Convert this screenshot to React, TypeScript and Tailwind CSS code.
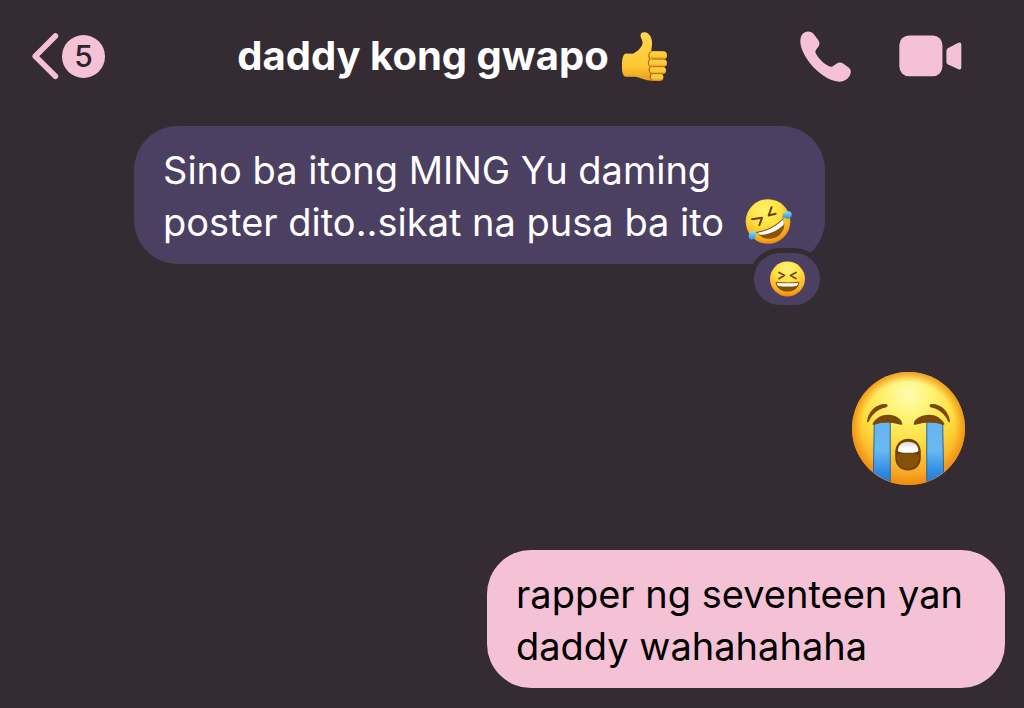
import React from "react";

interface Message {
  id: number;
  text: string;
  emoji?: React.ReactNode;
  reaction?: React.ReactNode;
}

const BackIcon = () => (
  <svg viewBox="36 34 80 142" className="h-[47px] w-[27px]" aria-hidden="true">
    <path
      d="M106 43 L45 104 L106 165"
      fill="none"
      stroke="#f5c1d5"
      strokeWidth="17"
      strokeLinecap="round"
      strokeLinejoin="round"
    />
  </svg>
);

const PhoneIcon = () => (
  <svg viewBox="29 30 154 154" className="size-[51px]" aria-hidden="true">
    <path
      d="M44 34 C53 29 65 32 71 40 L84 57 C89 64 89 71 84 78 L77 87 C75 91 75 94 77 98 C87 116 102 130 119 137 C123 139 126 138 129 136 L139 129 C146 124 153 124 160 129 L176 140 C184 146 184 156 179 165 C173 176 161 183 148 183 C124 183 93 164 69 139 C47 115 31 85 30 64 C30 50 33 39 44 34 Z"
      fill="#f5c1d5"
    />
  </svg>
);

const VideoIcon = () => (
  <svg viewBox="328 44 190 126" className="h-[42px] w-[63px]" aria-hidden="true">
    <rect x="329" y="45" width="130" height="123" rx="29" fill="#f5c1d5" />
    <path
      d="M475 84 L507 67 Q516 64 516 73 V141 Q516 150 507 147 L475 132 Q471 130 471 125 V92 Q471 87 475 84 Z"
      fill="#f5c1d5"
    />
  </svg>
);

const ThumbsUp = () => (
  <svg viewBox="62 36 142 152" className="h-[51px] w-[47px] shrink-0" role="img" aria-label="thumbs up">
    <defs>
      <linearGradient id="thumb" x1="0" y1="0" x2="0" y2="1">
        <stop offset="0" stopColor="#ffd551" />
        <stop offset="0.7" stopColor="#fdc936" />
        <stop offset="1" stopColor="#e79c1d" />
      </linearGradient>
      <linearGradient id="finger" x1="0" y1="0" x2="0" y2="1">
        <stop offset="0" stopColor="#ffd64b" />
        <stop offset="0.65" stopColor="#fcc434" />
        <stop offset="1" stopColor="#d98b16" />
      </linearGradient>
    </defs>
    <path
      d="M121 48 C121 40 128 37 136 39 C149 42 156 58 156 72 C156 82 153 90 154 97 L190 98 L187 180 C176 186 151 187 136 182 C119 177 111 172 99 173 L77 173 C68 173 64 157 65 137 C65 117 69 104 77 103 L98 104 C108 99 125 87 127 73 C129 64 121 57 121 48 Z"
      fill="url(#thumb)"
    />
    <path d="M154 96 C142 104 146 113 149 119 C143 127 144 137 150 143 C146 150 148 159 153 164 C149 171 151 179 158 184" fill="none" stroke="#b66c0d" strokeWidth="4" />
    <rect x="149" y="96" width="52" height="25" rx="12" fill="url(#finger)" />
    <rect x="148" y="120" width="53" height="24" rx="12" fill="url(#finger)" />
    <rect x="150" y="143" width="48" height="22" rx="11" fill="url(#finger)" />
    <rect x="153" y="164" width="37" height="22" rx="11" fill="url(#finger)" />
    <path d="M155 120 H193 M155 143 H193 M157 164 H187" stroke="#a9630b" strokeWidth="2.5" strokeLinecap="round" />
  </svg>
);

const Rofl = () => (
  <svg
    viewBox="78 56 144 140"
    className="-mt-2 ml-2.5 inline-block h-[47px] w-12 align-middle"
    role="img"
    aria-label="rolling on the floor laughing"
  >
    <defs>
      <radialGradient id="rofl" cx="0.42" cy="0.25" r="0.78">
        <stop offset="0" stopColor="#fff36a" />
        <stop offset="0.45" stopColor="#ffe03f" />
        <stop offset="0.8" stopColor="#fbb01f" />
        <stop offset="1" stopColor="#ea8612" />
      </radialGradient>
      <linearGradient id="roflTear" x1="0" y1="0" x2="0" y2="1">
        <stop offset="0" stopColor="#8bdcfb" />
        <stop offset="1" stopColor="#2792d3" />
      </linearGradient>
    </defs>
    <circle cx="147" cy="126" r="67" fill="url(#rofl)" />
    <path d="M99 119 L129 115 L121 137" fill="none" stroke="#6b3d04" strokeWidth="6" strokeLinecap="round" strokeLinejoin="round" />
    <path d="M158 83 L149 108 L170 103" fill="none" stroke="#6b3d04" strokeWidth="6" strokeLinecap="round" strokeLinejoin="round" />
    <path d="M114 159 C144 153 171 140 192 119 C203 141 190 166 167 175 C147 182 124 176 114 159 Z" fill="#8a5205" />
    <path d="M115 158 C145 153 171 140 192 120 C195 126 195 132 193 137 C175 153 150 166 123 166 C119 163 117 161 115 158 Z" fill="#fff" />
    <path d="M112 159 C144 154 171 140 193 117" fill="none" stroke="#784505" strokeWidth="3" strokeLinecap="round" />
    <path d="M191 107 C195 97 207 92 214 97 C221 102 219 115 210 117 C202 119 196 114 189 113 Z" fill="url(#roflTear)" />
    <path d="M110 157 C101 153 91 158 89 168 C88 177 94 182 101 180 C110 177 109 167 113 161 Z" fill="url(#roflTear)" />
  </svg>
);

const Laughing = () => (
  <svg viewBox="149 244 106 108" className="h-9 w-[35px]" role="img" aria-label="laughing">
    <defs>
      <radialGradient id="laugh" cx="0.5" cy="0.2" r="0.8">
        <stop offset="0" stopColor="#fff47a" />
        <stop offset="0.45" stopColor="#ffe045" />
        <stop offset="0.8" stopColor="#fbb424" />
        <stop offset="1" stopColor="#ea8512" />
      </radialGradient>
    </defs>
    <circle cx="202" cy="298" r="53" fill="url(#laugh)" />
    <path
      d="M176 278 L193 287 L176 297 M228 278 L211 287 L228 297"
      fill="none"
      stroke="#6b3d04"
      strokeWidth="5"
      strokeLinecap="round"
      strokeLinejoin="round"
    />
    <path d="M166 306 Q202 311 238 306 C237 324 222 336 202 336 C182 336 167 324 166 306 Z" fill="#835006" />
    <path d="M169 309 Q202 313 235 309 C234 314 232 317 229 319 Q202 323 175 319 C172 317 170 314 169 309 Z" fill="#fff" />
  </svg>
);

const LoudlyCrying = () => (
  <svg viewBox="36 35 340 340" className="size-[113px]" role="img" aria-label="loudly crying">
    <defs>
      <radialGradient id="sob" cx="0.5" cy="0.2" r="0.82">
        <stop offset="0" stopColor="#fffcb0" />
        <stop offset="0.25" stopColor="#fff372" />
        <stop offset="0.55" stopColor="#fedb3b" />
        <stop offset="0.82" stopColor="#f9ad28" />
        <stop offset="1" stopColor="#ee8a1b" />
      </radialGradient>
      <radialGradient id="sobRim" cx="0.5" cy="0.5" r="0.5">
        <stop offset="0.82" stopColor="#f39a12" stopOpacity="0" />
        <stop offset="1" stopColor="#f08c10" stopOpacity="0.85" />
      </radialGradient>
      <linearGradient id="stream" x1="0" y1="0" x2="0" y2="1">
        <stop offset="0" stopColor="#68b5ee" />
        <stop offset="0.45" stopColor="#68b8f1" />
        <stop offset="0.8" stopColor="#2f8ae3" />
        <stop offset="1" stopColor="#2475d5" />
      </linearGradient>
      <linearGradient id="teeth" x1="0" y1="0" x2="0" y2="1">
        <stop offset="0" stopColor="#d8d8d8" />
        <stop offset="0.6" stopColor="#ffffff" />
      </linearGradient>
      <clipPath id="face">
        <circle cx="206" cy="205" r="169" />
      </clipPath>
    </defs>
    <circle cx="206" cy="205" r="170" fill="url(#sob)" />
    <circle cx="206" cy="205" r="170" fill="url(#sobRim)" />
    <path d="M81 184 C84 155 107 130 138 131 C146 132 144 140 137 142 C112 148 97 162 87 183 C85 187 81 187 81 184 Z" fill="#7b4706" />
    <path d="M331 184 C328 155 305 130 275 131 C267 132 268 140 275 142 C300 148 315 162 325 183 C327 187 331 187 331 184 Z" fill="#7b4706" />
    <g clipPath="url(#face)">
      <path d="M103 185 H151 V375 H100 Z" fill="url(#stream)" stroke="#28669c" strokeWidth="3" />
      <path d="M261 185 H309 L312 375 H261 Z" fill="url(#stream)" stroke="#28669c" strokeWidth="3" />
    </g>
    <path d="M98 191 C107 174 125 164 145 164 C167 164 183 175 187 189 C188 194 184 195 179 193 C153 184 124 185 106 193 C101 195 97 195 98 191 Z" fill="#7b4706" />
    <path d="M314 191 C305 174 287 164 267 164 C245 164 226 175 222 189 C221 194 225 195 230 193 C256 184 288 185 306 193 C311 195 315 195 314 191 Z" fill="#7b4706" />
    <path d="M166 278 C166 252 182 236 205 236 C228 236 243 252 243 278 V292 C243 316 228 331 205 331 C182 331 166 316 166 292 Z" fill="#744004" />
    <path d="M172 286 C177 278 232 278 237 286 V293 C236 314 224 325 205 325 C185 325 173 314 172 293 Z" fill="#84530a" />
    <path d="M174 271 C176 253 188 245 205 245 C222 245 234 253 236 271 C235 276 225 278 205 278 C185 278 175 276 174 271 Z" fill="url(#teeth)" />
  </svg>
);

const received: Message = {
  id: 1,
  text: "Sino ba itong MING Yu daming poster dito..sikat na pusa ba ito",
  emoji: <Rofl />,
  reaction: <Laughing />,
};

const sent: Message = {
  id: 2,
  text: "rapper ng seventeen yan daddy wahahahaha",
};

const ChatHeader = () => (
  <header className="flex h-28 items-center justify-between pr-[62px] pl-8">
    <button type="button" aria-label="Back, 5 unread chats" className="flex items-center gap-[3px]">
      <BackIcon />
      <span className="flex size-[43px] items-center justify-center rounded-full bg-[#f5c1d5] text-3xl font-medium text-[#2b2329]">
        5
      </span>
    </button>
    <h1 className="flex items-center gap-3 text-[40px] font-bold text-white">
      daddy kong gwapo
      <ThumbsUp />
    </h1>
    <div className="flex items-center gap-12">
      <button type="button" aria-label="Audio call">
        <PhoneIcon />
      </button>
      <button type="button" aria-label="Video call">
        <VideoIcon />
      </button>
    </div>
  </header>
);

const App: React.FC = () => {
  return (
    <div className="min-h-screen bg-[#352c33] font-['Inter','Liberation_Sans',sans-serif]">
      <ChatHeader />
      <main className="flex flex-col pt-[14px] pr-[19px] pb-5 pl-[134px]">
        <div className="relative w-full max-w-[691px] self-start rounded-[44px] bg-[#4c4062] px-[29px] pt-[18px] pb-4 text-[38px] leading-[52px] text-white">
          <p>
            {received.text} {received.emoji}
          </p>
          <span className="absolute right-0 -bottom-[46px] flex h-[62px] w-[76px] items-center justify-center rounded-full border-5 border-[#352c33] bg-[#4c4062]">
            {received.reaction}
          </span>
        </div>

        <div className="mt-[108px] mr-10 self-end">
          <LoudlyCrying />
        </div>

        <div className="mt-[65px] max-w-[518px] self-end rounded-[44px] bg-[#f5c1d5] px-[29px] pt-[18px] pb-4 text-[38px] leading-[52px] text-black">
          <p>{sent.text}</p>
        </div>
      </main>
    </div>
  );
};

export default App;
